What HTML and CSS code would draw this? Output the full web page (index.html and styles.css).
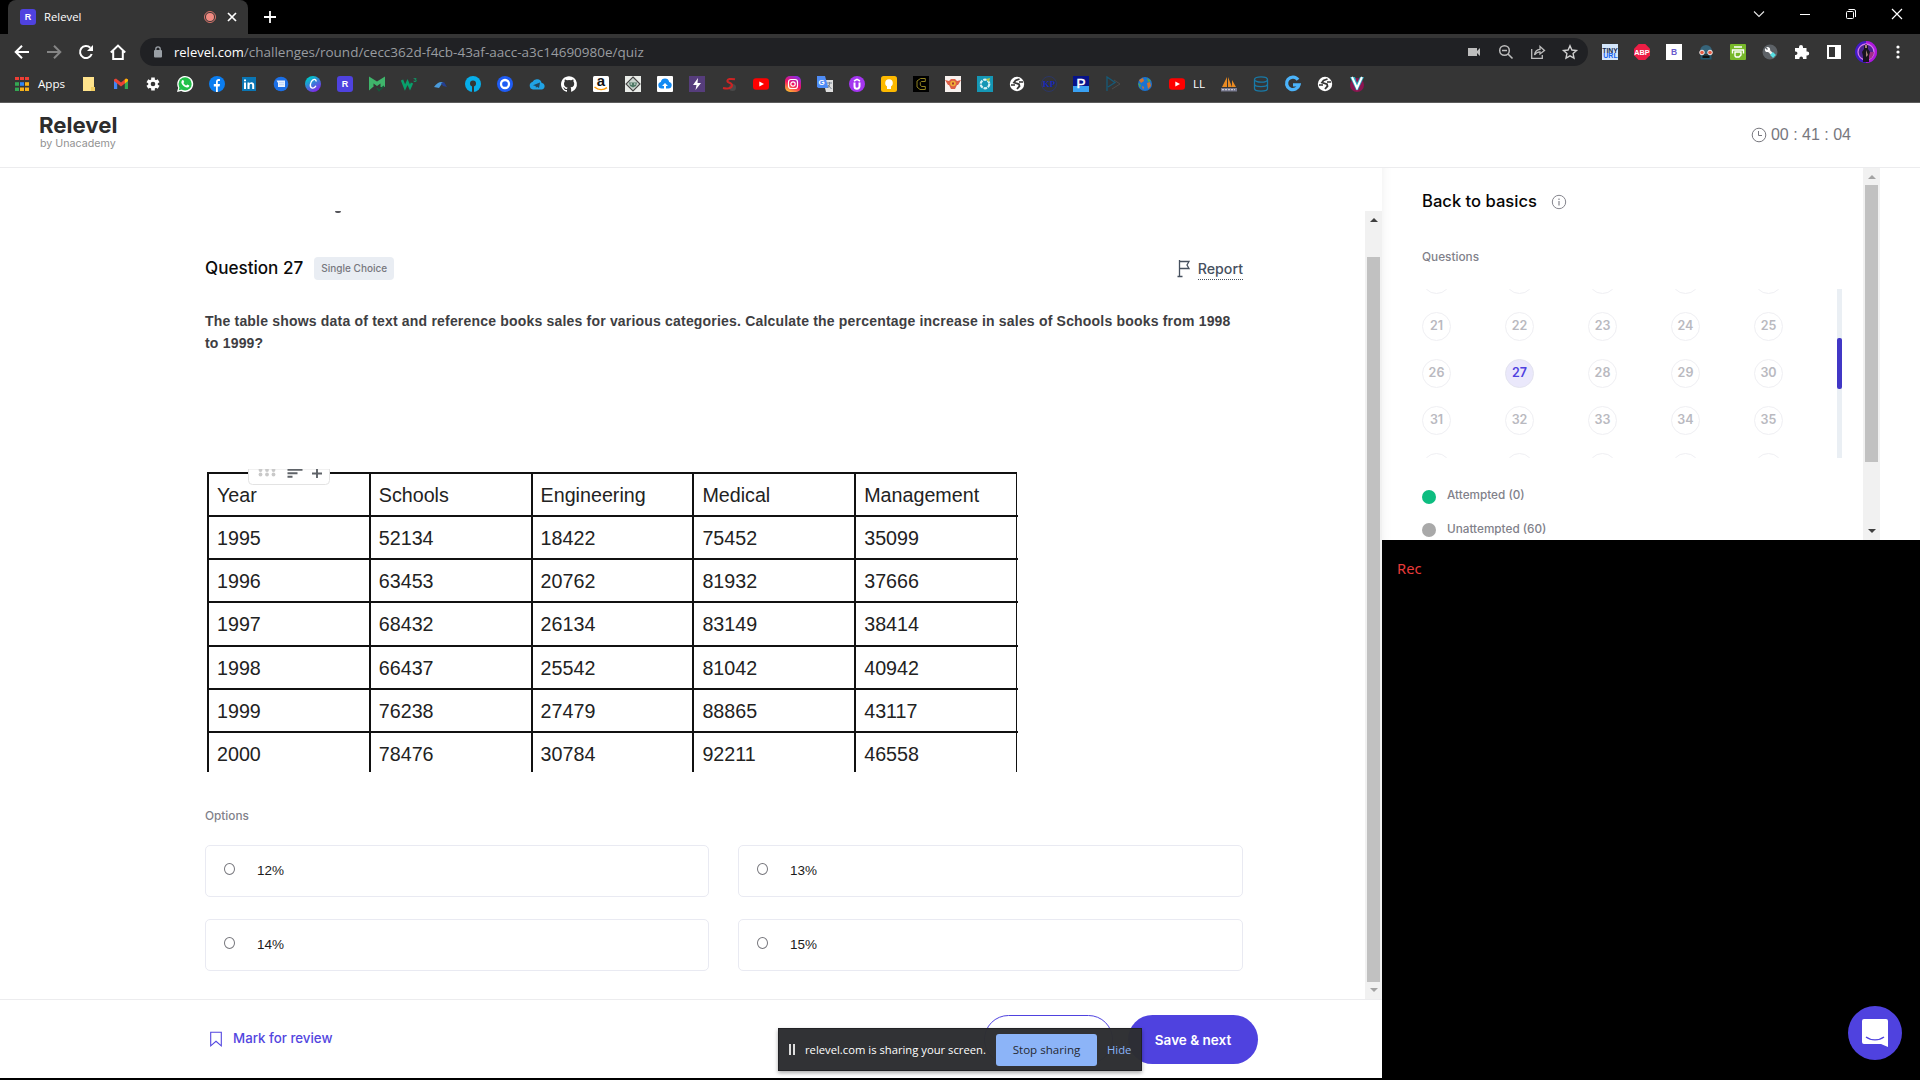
FILE: index.html
```html
<!DOCTYPE html>
<html lang="en">
<head>
<meta charset="utf-8">
<title>Relevel</title>
<link rel="stylesheet" href="styles.css">
</head>
<body>
<header class="browser">
  <div class="tabstrip">
    <div class="tab">
      <svg class="i16" viewBox="0 0 16 16"><rect width="16" height="16" rx="3" fill="#4f42df"/><text x="8" y="11.2" text-anchor="middle" class="glyph bold" font-size="9" fill="#fff">R</text></svg>
      <span class="tab-title">Relevel</span>
      <svg class="rec-dot" viewBox="0 0 12 12"><circle cx="6" cy="6" r="5.5" fill="none" stroke="#d9746b"/><circle cx="6" cy="6" r="4" fill="#f28b82"/></svg>
      <svg class="tab-close" viewBox="0 0 10 10"><path d="M1 1l8 8M9 1L1 9" stroke="#fff" stroke-width="1.7"/></svg>
    </div>
    <svg class="new-tab" viewBox="0 0 12 12"><path d="M6 0v12M0 6h12" stroke="#fff" stroke-width="1.8"/></svg>
    <div class="window-controls">
      <svg viewBox="0 0 12 12"><path d="M1 3.5l5 5 5-5" fill="none" stroke="#e6e6e6" stroke-width="1.1"/></svg>
      <svg viewBox="0 0 12 12"><path d="M1 6.5h10" stroke="#fff"/></svg>
      <svg viewBox="0 0 12 12"><rect x="1.5" y="3.5" width="7" height="7" rx="1" fill="none" stroke="#fff"/><path d="M3.5 1.5H9a1.5 1.5 0 0 1 1.5 1.5v6" fill="none" stroke="#fff"/></svg>
      <svg viewBox="0 0 12 12"><path d="M1 1l10 10M11 1L1 11" stroke="#fff" stroke-width="1.2"/></svg>
    </div>
  </div>
  <div class="toolbar">
    <div class="nav">
      <svg class="i16" viewBox="0 0 16 16"><path d="M15 8H2M8 1.7L1.7 8 8 14.3" fill="none" stroke="#fff" stroke-width="2"/></svg>
      <svg class="i16" viewBox="0 0 16 16"><path d="M1 8h13M8 1.7L14.3 8 8 14.3" fill="none" stroke="#858585" stroke-width="2"/></svg>
      <svg class="i16" viewBox="0 0 16 16"><path d="M13.7 10A6 6 0 1 1 12.3 3.8" fill="none" stroke="#fff" stroke-width="2"/><path d="M15 1v6H9z" fill="#fff"/></svg>
      <svg class="i16" viewBox="0 0 16 16"><path d="M.8 8.4L8 1.6l7.2 6.8M3.2 7v8h9.6V7" fill="none" stroke="#fff" stroke-width="2"/></svg>
    </div>
    <div class="omnibox">
      <svg class="lock" viewBox="0 0 10 12"><rect x="1" y="4" width="8" height="7.5" rx="1" fill="#9aa0a6"/><path d="M2.8 5V3a2.2 2.2 0 0 1 4.4 0v2" fill="none" stroke="#9aa0a6" stroke-width="1.3"/></svg>
      <span class="url"><b>relevel.com</b>/challenges/round/cecc362d-f4cb-43af-aacc-a3c14690980e/quiz</span>
      <div class="omni-actions">
        <svg class="i16" viewBox="0 0 16 16"><path d="M2 4h9v8H2zM11 7l3-3v8l-3-3z" fill="#bdbdbd"/></svg>
        <svg class="i16" viewBox="0 0 16 16"><circle cx="6.5" cy="6.5" r="4.8" fill="none" stroke="#bdbdbd" stroke-width="1.5"/><path d="M4 6.5h5M10 10l4.5 4.5" stroke="#bdbdbd" stroke-width="1.6"/></svg>
        <svg class="i16" viewBox="0 0 16 16"><path d="M1.7 5v9.3h10.6V11M4.5 11c.5-4 2.5-5.5 5.5-5.7V2.500L14.500 6.500 10 10V7.800C7.500 7.800 6 8.600 4.500 11z" fill="none" stroke="#bdbdbd" stroke-width="1.300"/></svg>
        <svg class="i16" viewBox="0 0 16 16"><path d="M8 1.800l1.900 4.200 4.600.5-3.400 3.100.9 4.600L8 11.900l-4 2.300.9-4.600L1.500 6.500 6.100 6z" fill="none" stroke="#d0d0d0" stroke-width="1.400"/></svg>
      </div>
    </div>
    <div class="extensions">
      <svg class="i16" viewBox="0 0 16 16"><rect width="16" height="16" fill="#d3e6fb"/><text x="8" y="8.500" text-anchor="middle" class="glyph bold" font-size="7.500" textLength="15.500" lengthAdjust="spacingAndGlyphs" fill="#14294f">TINY</text><text x="8.500" y="13.500" text-anchor="middle" class="glyph bold" font-size="7" fill="#1663ee">URL</text></svg>
      <svg class="i16" viewBox="0 0 16 16"><path d="M4.700 0h6.600L16 4.700v6.600L11.300 16H4.700L0 11.300V4.700z" fill="#ed1e45"/><text x="8" y="10.700" text-anchor="middle" class="glyph bold" font-size="7.300" fill="#fff">ABP</text></svg>
      <svg class="i16" viewBox="0 0 16 16"><rect width="16" height="16" fill="#fff"/><text x="8" y="11" text-anchor="middle" class="glyph bold" font-size="8.500" fill="#6a5acd">B</text></svg>
      <svg class="i16" viewBox="0 0 16 16"><path d="M2 7a6 6 0 0 1 12 0v3H2z" fill="#36647a"/><path d="M2.500 11h11v4.500h-11z" fill="#20566d"/><path d="M4.500 11.500h7v2.500h-7z" fill="#111"/><circle cx="4" cy="8.500" r="2.300" fill="#e85d45" stroke="#eee"/><circle cx="12" cy="8.500" r="2.300" fill="#e85d45" stroke="#eee"/></svg>
      <svg class="i16" viewBox="0 0 16 16"><rect width="16" height="16" rx="1" fill="#77b82a"/><path d="M4 3h8M2.500 9.500V6h11v3.500M5 8h6v3l-2 2H6l-1-1z" fill="none" stroke="#fff" stroke-width="1.400"/></svg>
      <svg class="i16" viewBox="0 0 16 16"><circle cx="8" cy="8" r="7.500" fill="#5d6267"/><path d="M5 5l5 5" stroke="#eee" stroke-width="2.500"/><circle cx="5.500" cy="5.500" r="2.600" fill="#fff"/><path d="M3 3l2.500 2.500" stroke="#5d6267" stroke-width="1.300"/><path d="M9.500 9.500l3 3" stroke="#56dfe3" stroke-width="4"/></svg>
      <svg class="i16" viewBox="0 0 16 16"><path d="M1 4h4V3a2 2 0 0 1 4 0v1h3.500v3.500h.7a2 2 0 0 1 0 4h-.7V15H9v-.8a1.800 1.800 0 0 0-3.600 0v.8H1v-4h.7a1.700 1.700 0 0 0 0-3.500H1z" fill="#fff"/></svg>
      <svg class="i16" viewBox="0 0 16 16"><path d="M1 1h14v14H1zM3 3v10h6V3z" fill="#fff" fill-rule="evenodd"/></svg>
    </div>
    <svg class="avatar" viewBox="0 0 22 22"><circle cx="11" cy="11" r="11" fill="#4219c8"/><path d="M11 0a11 11 0 0 1 0 22z" fill="#b018d9"/><circle cx="11" cy="11" r="8" fill="#4a2590" stroke="#d478ee" stroke-width="1.300"/><path d="M11 11h8a8 8 0 0 1-8 8z" fill="#a1308c"/><path d="M11 3l2 2v3l2 3-1 4v6H8v-6l-1-4 2-3V5z" fill="#17151c"/><path d="M10 4h2v3h-2zM11 9l2 5-2 2z" fill="#a78574"/></svg>
    <svg class="menu-dots" viewBox="0 0 4 16"><circle cx="2" cy="3" r="1.600" fill="#fff"/><circle cx="2" cy="8" r="1.600" fill="#fff"/><circle cx="2" cy="13" r="1.600" fill="#fff"/></svg>
  </div>
  <nav class="bookmarks">
    <span class="apps"><svg viewBox="0 0 14 14"><path d="M0 1.500h4M5 1.500h4M10 1.500h4" stroke="#ee3e35" stroke-width="3"/><path d="M0 7h4" stroke="#34a853" stroke-width="3.600"/><path d="M5 7h4" stroke="#2f86f6" stroke-width="3.600"/><path d="M10 7h4" stroke="#f6b21b" stroke-width="3.600"/><path d="M0 12.300h4" stroke="#34a853" stroke-width="3.400"/><path d="M5 12.300h9" stroke="#f6b21b" stroke-width="3.400" stroke-dasharray="4 1"/></svg>Apps</span>
    <svg class="i16" viewBox="0 0 16 16"><path d="M2 1h11v10h1v4H2z" fill="#ffe38c"/><path d="M10 11h4v4h-4z" fill="#f4cf60"/></svg>
    <svg class="i16" viewBox="0 0 16 16"><path d="M1 4.500V13h3.200V7z" fill="#4285f4"/><path d="M15 4.500V13h-3.200V7z" fill="#34a853"/><path d="M1 5V3.500l2-1 5 4 5-4 2 1V5l-7 5.500z" fill="#ea4335"/><path d="M11.800 3.700L13 2.500l2 1V5l-3.200 2.500z" fill="#fbbc04"/></svg>
    <svg class="i16" viewBox="0 0 16 16"><g stroke="#fff" stroke-width="3.600"><path d="M8 1.500v13M2.400 4.700l11.200 6.600M2.400 11.300l11.200-6.600"/></g><circle cx="8" cy="8" r="4.800" fill="#fff"/><circle cx="8" cy="8" r="2.300" fill="#353535"/></svg>
    <svg class="i16" viewBox="0 0 16 16"><path d="M0 16l1.200-4.200A8 8 0 1 1 4.200 14.900z" fill="#fff"/><circle cx="8.100" cy="7.900" r="6.600" fill="#23c04a"/><path d="M1.700 14.300l1-3.300 2.400 2.400z" fill="#23c04a"/><path d="M5 4.200l1.300-.2.900 2-.8 1c.8 1.400 1.500 2 2.900 2.600l1-1.100 2 1c0 1.500-1.300 2.100-2.300 1.900C7 11 4.600 8.500 4.300 6.200z" fill="#fff"/></svg>
    <svg class="i16" viewBox="0 0 16 16"><circle cx="8" cy="8" r="8" fill="#0b7df0"/><path d="M7 16v-5.500H4.800V8H7V6c0-2.300 1.400-3.400 3.900-3v2.100H9.600c-.6 0-.8.3-.8 1V8h2.200l-.4 2.500H8.800V16z" fill="#fff"/></svg>
    <svg class="i16" viewBox="0 0 16 16"><rect x="1" y="1" width="14" height="14" fill="#0a76b4"/><path d="M3 6.500h2V13H3zM3 3.400h2v1.900H3zM6.500 6.500h2v.9c1.200-1.700 4.700-1.500 4.700 1.700V13h-2V9.500c0-1.900-2.600-1.800-2.600 0V13H6.500z" fill="#fff"/></svg>
    <svg class="i16" viewBox="0 0 16 16"><circle cx="8" cy="8" r="7.300" fill="#1b6fe6"/><path d="M3.500 4.500H12V11H5V7z" fill="#e6f0ff"/><path d="M6 6.700h5M6 8.700h5" stroke="#b8d2f8"/></svg>
    <svg class="i16" viewBox="0 0 16 16"><defs><linearGradient id="canva" x2=".6" y2="1"><stop offset=".2" stop-color="#00c4cc"/><stop offset="1" stop-color="#7d2ae8"/></linearGradient></defs><circle cx="8" cy="8" r="8" fill="url(#canva)"/><path d="M11 5.500c.4-2-1.500-2.600-3-1.600-2.800 1.900-3.700 7-1.200 8 1.600.6 3.300-.6 4.100-2.200" fill="none" stroke="#fff" stroke-width="1.400"/></svg>
    <svg class="i16" viewBox="0 0 16 16"><rect width="16" height="16" rx="3" fill="#4f42df"/><text x="8" y="11.200" text-anchor="middle" class="glyph bold" font-size="9" fill="#fff">R</text></svg>
    <svg class="i16" viewBox="0 0 16 16"><path d="M0 .5l8 5 8-5V11H0zM0 11h4l-4 3.500z" fill="#3fb56b"/><path d="M4.500 7.500L8 10l3.500-2.500V11h-7z" fill="#353535"/><path d="M8 12l2 2.500L15 10" fill="none" stroke="#14593a" stroke-width="1.600"/></svg>
    <svg class="i16" viewBox="0 0 16 16"><path d="M1 4l3 7.500L6.500 6 9 11.500 11 7" fill="none" stroke="#08a06b" stroke-width="2.500"/><text x="12.500" y="5.500" class="glyph bold" font-size="6" fill="#08a06b">3</text></svg>
    <svg class="i16" viewBox="0 0 16 16"><path d="M1 11c3-4 5-5.500 9-5l-4 6z" fill="#4a9bdc"/><path d="M8 7l3-1 3 5-4-1z" fill="#243f92"/></svg>
    <svg class="i16" viewBox="0 0 16 16"><circle cx="8" cy="8" r="8" fill="#07aeea"/><circle cx="8" cy="7.500" r="3" fill="#353535"/><path d="M7 8h2v8H7z" fill="#353535"/></svg>
    <svg class="i16" viewBox="0 0 16 16"><circle cx="8" cy="8" r="8" fill="#1f5cf4"/><circle cx="8" cy="8" r="4" fill="none" stroke="#fff" stroke-width="2.300"/></svg>
    <svg class="i16" viewBox="0 0 16 16"><path d="M4 13.500a3.800 3.800 0 0 1-.6-7.400A5 5 0 0 1 12.700 7 3.300 3.300 0 0 1 13 13.500z" fill="#20a3e5"/><path d="M4 9.300L11 6.500 10 12l-2-1.300-1 1-.4-1.800z" fill="#23465e"/></svg>
    <svg class="i16" viewBox="0 0 16 16"><path d="M8 .2C3.600.2 0 3.800 0 8.200c0 3.500 2.300 6.500 5.500 7.600.4.100.5-.2.500-.4v-1.500c-2.200.5-2.700-1-2.700-1-.4-.9-.9-1.200-.9-1.200-.7-.5.100-.5.100-.5.800.1 1.200.8 1.200.8.700 1.300 1.900.9 2.400.7.100-.5.300-.9.500-1.100-1.800-.2-3.600-.9-3.600-4 0-.9.300-1.600.8-2.100-.1-.2-.4-1 .1-2.100 0 0 .7-.2 2.200.8a7.500 7.500 0 0 1 4 0c1.500-1 2.200-.8 2.200-.8.400 1.100.2 1.900.1 2.100.5.600.8 1.300.8 2.100 0 3.100-1.900 3.700-3.700 3.900.3.300.6.800.6 1.500v2.300c0 .2.100.5.600.4A8 8 0 0 0 8 .2z" fill="#fff"/></svg>
    <svg class="i16" viewBox="0 0 16 16"><rect width="16" height="16" rx="1.500" fill="#fff"/><text x="8" y="10" text-anchor="middle" class="glyph bold" font-size="15" fill="#111">a</text><path d="M1.500 11c4 3.300 9 3.300 12.500.7" fill="none" stroke="#f90" stroke-width="1.500"/></svg>
    <svg class="i16" viewBox="0 0 16 16"><rect width="16" height="16" fill="#e9ece8"/><path d="M8 1l7 7-7 7-7-7z" fill="#c8d2cc" stroke="#444" stroke-width="1.100"/><path d="M4 6.500h8l-1 3.500-3 1.500L5 10z" fill="#4e7865"/><path d="M5.500 8h1.500M9 8h1.500" stroke="#fff"/></svg>
    <svg class="i16" viewBox="0 0 16 16"><rect width="16" height="16" rx="1" fill="#fff"/><path d="M4.500 12.500a3.300 3.300 0 0 1-.7-6.500 4.300 4.300 0 0 1 8.400 0 3.300 3.300 0 0 1-.7 6.500z" fill="#128af3"/><path d="M8 7l3 3H9v4H7v-4H5z" fill="#fff"/></svg>
    <svg class="i16" viewBox="0 0 16 16"><rect width="16" height="16" fill="#563d7c"/><path d="M9 2L4 9h3.500L6.500 14l5.500-7H8.500z" fill="#fff"/></svg>
    <svg class="i16" viewBox="0 0 16 16"><circle cx="11.500" cy="11.500" r="3.500" fill="#494949"/><path d="M14 3.300C9 2.500 6.500 3 6.300 5s5.200 1.500 4.700 4.500c-.4 3-5 3.500-9 2.500" fill="none" stroke="#cc2424" stroke-width="2"/></svg>
    <svg class="i16" viewBox="0 0 16 16"><rect y="2.300" width="16" height="11.400" rx="3" fill="#f00"/><path d="M6.300 5.500L11 8l-4.700 2.500z" fill="#fff"/></svg>
    <svg class="i16" viewBox="0 0 16 16"><defs><linearGradient id="insta" x1=".7" y1="0" x2=".2" y2="1"><stop offset="0" stop-color="#8a2be2"/><stop offset=".5" stop-color="#f5125f"/><stop offset="1" stop-color="#fdc12f"/></linearGradient></defs><rect width="16" height="16" rx="5" fill="url(#insta)"/><rect x="3.500" y="3.500" width="9" height="9" rx="2.500" fill="none" stroke="#fff" stroke-width="1.200"/><circle cx="8" cy="8" r="2.200" fill="none" stroke="#fff" stroke-width="1.200"/></svg>
    <svg class="i16" viewBox="0 0 16 16"><path d="M6 4h10v12H9z" fill="#dedede"/><path d="M0 0h8l3.500 12H1.500L0 11z" fill="#4f8df6"/><text x="1.500" y="9" class="glyph bold" font-size="8" fill="#fff">G</text><path d="M10 7h5M12.500 6c0 3 0 4-2 6M11 9l3.500 4" fill="none" stroke="#76818f"/></svg>
    <svg class="i16" viewBox="0 0 16 16"><circle cx="8" cy="8" r="8" fill="#a435f0"/><path d="M5.500 6.500v3.800a2.500 2.500 0 0 0 5 0V6.500" fill="none" stroke="#fff" stroke-width="2"/><path d="M5 5l3-1.700L11 5" fill="none" stroke="#fff" stroke-width="1.500"/></svg>
    <svg class="i16" viewBox="0 0 16 16"><rect width="16" height="16" rx="2.500" fill="#fdb900"/><circle cx="8" cy="7" r="3.800" fill="#fff"/><path d="M6 10h4v3H6z" fill="#fff"/></svg>
    <svg class="i16" viewBox="0 0 16 16"><rect width="16" height="16" fill="#000"/><path d="M12.300 2.500H7.500L4 5v6l3 2.500h5.300v-3H8.500L7.300 9V6.500l1-1h4z" fill="none" stroke="#8f8120"/></svg>
    <svg class="i16" viewBox="0 0 16 16"><rect width="16" height="16" fill="#f8f1ee"/><path d="M0 4l4 1 2-2h4l2 2 4-1-3 5H3zM4 9h8l-2 4H6z" fill="#dd5f46"/><circle cx="8" cy="7.500" r="2.800" fill="#efaf36"/><path d="M7 6.500h2v2H7z" fill="#a8352f"/></svg>
    <svg class="i16" viewBox="0 0 16 16"><rect width="16" height="16" fill="#1597b5"/><circle cx="8" cy="8" r="4.300" fill="none" stroke="#d6f1f4" stroke-width="2.200" stroke-dasharray="3.500 1"/><path d="M9 3l4-1-1 4z" fill="#b8c943"/></svg>
    <svg class="i16" viewBox="0 0 16 16"><circle cx="8" cy="8" r="7.200" fill="#fff"/><path d="M10.500 3L6.500 4.500 5 6.500l5 1.700.5 2L8 13" fill="none" stroke="#353535" stroke-width="1.800"/><path d="M10 6h4M2 9h4" stroke="#353535" stroke-width="1.300"/></svg>
    <svg class="i16" viewBox="0 0 16 16"><circle cx="8" cy="8" r="7.500" fill="none" stroke="#27357c" stroke-width=".7"/><text x="8" y="10.800" text-anchor="middle" class="serif-glyph" font-size="9" fill="#1528bb">KP</text></svg>
    <svg class="i16" viewBox="0 0 16 16"><rect width="16" height="16" fill="#06128a"/><path d="M0 10h16v6H0z" fill="#39a1f4"/><text x="8" y="12" text-anchor="middle" class="glyph" font-size="13.500" stroke="#fff" stroke-width=".5" fill="#fff">P</text></svg>
    <svg class="i16" viewBox="0 0 16 16"><path d="M2 15V1l8 5.500-7 4.500" fill="none" stroke="#165a78" stroke-width="1.300"/><path d="M9 4l6 4-8 5" fill="none" stroke="#4b4b4b"/></svg>
    <svg class="i16" viewBox="0 0 16 16"><circle cx="8" cy="8" r="7" fill="#1a73d2"/><path d="M2 4l4-2 1 3-3 2zM10 7l3-1 1 4-3 3zM5 10l2 1-1 3z" fill="#d5732a"/><path d="M10 2l4 3-3 1zM1 7l3 2-1 3z" fill="#56a83d"/></svg>
    <span class="bookmark-folder"><svg class="i16" viewBox="0 0 16 16"><rect y="2.300" width="16" height="11.400" rx="3" fill="#f00"/><path d="M6.300 5.500L11 8l-4.700 2.500z" fill="#fff"/></svg>LL</span>
    <svg class="i16" viewBox="0 0 16 16"><path d="M1 11L6 1v10zM7 11V1l4 10zM11 11V4l4 7z" fill="#e98a22"/><path d="M0 12h16v3.500H0z" fill="#77788f"/><path d="M1 13.700h13" stroke="#ddd" stroke-dasharray="2 1"/></svg>
    <svg class="i16" viewBox="0 0 16 16"><ellipse cx="8" cy="3.500" rx="6.500" ry="2.700" fill="none" stroke="#1979a6" stroke-width="1.300"/><path d="M1.500 3.500v9c0 3.500 13 3.500 13 0v-9M1.500 8c0 3.500 13 3.500 13 0" fill="none" stroke="#1979a6" stroke-width="1.300"/></svg>
    <svg class="i16" viewBox="0 0 16 16"><path d="M13 3.700A6.300 6.300 0 1 0 14 8.800H8" fill="none" stroke="#4bb3fa" stroke-width="3.300"/></svg>
    <svg class="i16" viewBox="0 0 16 16"><circle cx="8" cy="8" r="7.200" fill="#fff"/><path d="M10.500 3L6.500 4.500 5 6.500l5 1.700.5 2L8 13" fill="none" stroke="#353535" stroke-width="1.800"/><path d="M10 6h4M2 9h4" stroke="#353535" stroke-width="1.300"/></svg>
    <svg class="i16" viewBox="0 0 16 16"><circle cx="8" cy="9" r="7" fill="#8b1551"/><path d="M1 1h5l2 6 3-6h4L9 14H7z" fill="#27a9c0"/><path d="M3 1l5 11 5-11" fill="none" stroke="#fff" stroke-width="2"/></svg>
  </nav>
</header>

<div class="app">
  <header class="app-header">
    <div class="brand"><span class="brand-name">Relevel</span><span class="brand-by">by Unacademy</span></div>
    <div class="timer"><svg viewBox="0 0 16 16"><circle cx="8" cy="8" r="6.800" fill="none" stroke="#77777e"/><path d="M7.500 4v4.500H11" fill="none" stroke="#77777e"/></svg>00 : 41 : 04</div>
  </header>
  <div class="columns">
    <div class="main-col">
      <main class="quiz">
        <div class="scroll-area">
          <div class="clipped-line"></div>
          <div class="question-head">
            <h1>Question 27</h1><span class="chip">Single Choice</span>
            <a class="report"><svg viewBox="0 0 14 18"><path d="M2.500 0v16.500M.5 16.500h5M2.500 1.500h9.500l-2 3.500 2 3.500H2.500" fill="none" stroke="#47515f" stroke-width="1.300"/></svg><span>Report</span></a>
          </div>
          <p class="prompt">The table shows data of text and reference books sales for various categories. Calculate the percentage increase in sales of Schools books from 1998 to 1999?</p>
          <div class="figure">
            <div class="data-table">
              <span>Year</span><span>Schools</span><span>Engineering</span><span>Medical</span><span>Management</span>
              <span>1995</span><span>52134</span><span>18422</span><span>75452</span><span>35099</span>
              <span>1996</span><span>63453</span><span>20762</span><span>81932</span><span>37666</span>
              <span>1997</span><span>68432</span><span>26134</span><span>83149</span><span>38414</span>
              <span>1998</span><span>66437</span><span>25542</span><span>81042</span><span>40942</span>
              <span>1999</span><span>76238</span><span>27479</span><span>88865</span><span>43117</span>
              <span>2000</span><span>78476</span><span>30784</span><span>92211</span><span>46558</span>
            </div>
            <svg class="table-tools" viewBox="0 0 82 17"><path d="M.5 0v11.500a4 4 0 0 0 4 4h73a4 4 0 0 0 4-4V0z" fill="#fff" stroke="#e3e3e3"/><g fill="#c9c9c9"><circle cx="12.500" cy="1" r="1.900"/><circle cx="19" cy="1" r="1.900"/><circle cx="25.500" cy="1" r="1.900"/><circle cx="12.500" cy="5.500" r="1.900"/><circle cx="19" cy="5.500" r="1.900"/><circle cx="25.500" cy="5.500" r="1.900"/></g><path d="M39.500 .7h15M39.500 4.200h10M39.500 7.700h5M64 4.500h10M69 0v9" stroke="#5f6368" stroke-width="1.900"/></svg>
          </div>
          <h2 class="label">Options</h2>
          <div class="options">
            <label class="option"><i class="radio"></i>12%</label>
            <label class="option"><i class="radio"></i>13%</label>
            <label class="option"><i class="radio"></i>14%</label>
            <label class="option"><i class="radio"></i>15%</label>
          </div>
        </div>
        <div class="scrollbar quiz-scroll"><i class="arrow up dark"></i><i class="thumb"></i><i class="arrow down"></i></div>
      </main>
      <footer class="actions">
        <a class="mark"><svg viewBox="0 0 12 16"><path d="M.7 1.200h10.600v13.600L6 10.300.7 14.800z" fill="none" stroke="#5346e0" stroke-width="1.100"/></svg>Mark for review</a>
        <button class="btn ghost">Previous</button>
        <button class="btn primary">Save &amp; next</button>
      </footer>
    </div>
    <div class="side-col">
      <aside class="panel">
        <div class="panel-body">
          <h2 class="section-title">Back to basics <svg viewBox="0 0 16 16"><circle cx="8" cy="8" r="6.700" fill="none" stroke="#85858d"/><path d="M8 7v4.500M8 4.500V6" stroke="#85858d" stroke-width="1.200"/></svg></h2>
          <h3 class="label">Questions</h3>
          <div class="palette">
            <div class="numbers">
              <span></span><span></span><span></span><span></span><span></span>
              <span>21</span><span>22</span><span>23</span><span>24</span><span>25</span>
              <span>26</span><span class="current">27</span><span>28</span><span>29</span><span>30</span>
              <span>31</span><span>32</span><span>33</span><span>34</span><span>35</span>
              <span></span><span></span><span></span><span></span><span></span>
            </div>
            <div class="mini-scroll"><i></i></div>
          </div>
          <ul class="legend">
            <li><i class="green"></i>Attempted (0)</li>
            <li><i class="grey"></i>Unattempted (60)</li>
          </ul>
        </div>
        <div class="scrollbar panel-scroll"><i class="arrow up"></i><i class="thumb"></i><i class="arrow down dark"></i></div>
      </aside>
      <div class="camera">
        <span class="rec">Rec</span>
        <svg class="chat" viewBox="0 0 54 54"><circle cx="27" cy="27" r="27" fill="#4f42df"/><path d="M16 13h22a2 2 0 0 1 2 2v26l-7-3H16a2 2 0 0 1-2-2V15a2 2 0 0 1 2-2z" fill="#fff"/><path d="M18 31c5 3.800 13 3.800 18 0" fill="none" stroke="#4f42df" stroke-width="1.400"/></svg>
      </div>
    </div>
  </div>
</div>

<div class="share-bar">
  <i class="pause"></i><span class="share-text">relevel.com is sharing your screen.</span>
  <button class="stop">Stop sharing</button><a class="hide">Hide</a>
</div>
</body>
</html>
```
FILE: styles.css
```css
* { box-sizing: border-box; margin: 0; padding: 0; }
body { width: 1920px; height: 1080px; overflow: hidden; background: #000; font-family: Inter, "Open Sans", sans-serif; position: relative; }
svg { display: block; flex: none; overflow: visible; }
i { display: block; font-style: normal; }
button { border: 0; font: inherit; }
.i16 { width: 16px; height: 16px; }
.glyph { font-family: "Liberation Sans", sans-serif; }
.serif-glyph { font-family: "Liberation Serif", serif; font-weight: bold; }
.bold { font-weight: bold; }

/* Browser chrome */
.browser { height: 103px; background: #353535; border-bottom: 1px solid #5c5c5c; font-family: "Open Sans", sans-serif; color: #fff; }
.tabstrip { height: 34px; background: #000; display: flex; align-items: center; padding-left: 8px; }
.tab { width: 240px; height: 34px; background: #353535; border-radius: 8px 8px 0 0; display: flex; align-items: center; padding: 0 11px 0 12px; }
.tab-title { flex: 1; margin: -2px 0 0 8px; font-size: 11.300px; }
.rec-dot { width: 12px; height: 12px; margin-right: 11px; }
.tab-close { width: 10px; height: 10px; }
.new-tab { width: 12px; height: 12px; margin-left: 16px; }
.window-controls { margin: -6px 17px 0 auto; display: flex; gap: 34px; }
.window-controls svg { width: 12px; height: 12px; }
.toolbar { height: 36px; display: flex; align-items: center; }
.nav { width: 140px; padding-left: 14px; display: flex; gap: 16px; }
.omnibox { width: 1448px; height: 28px; border-radius: 14px; background: #202124; display: flex; align-items: center; padding: 0 10px 0 13px; }
.lock { width: 10px; height: 12px; }
.url { flex: 1; margin-left: 11px; font-size: 13.500px; color: #999ca0; line-height: 20px; }
.url b { font-weight: 400; font-size: 13px; color: #fff; }
.omni-actions, .extensions { display: flex; gap: 16px; }
.extensions { margin-left: 14px; }
.avatar { width: 22px; height: 22px; margin-left: 13px; }
.menu-dots { width: 4px; height: 16px; margin-left: 19px; }
.bookmarks { height: 28px; display: flex; align-items: center; gap: 16px; padding-left: 15px; font-size: 11.600px; line-height: 14px; }
.apps { width: 50px; display: flex; align-items: center; gap: 9px; }
.apps svg { width: 14px; height: 14px; }
.bookmark-folder { width: 36px; display: flex; align-items: center; gap: 8px; }

/* Application */
.app { height: 977px; display: flex; flex-direction: column; }
.app-header { height: 65px; background: #fff; border-bottom: 1px solid #ececee; display: flex; justify-content: space-between; padding: 9px 69px 0 39px; }
.brand { display: flex; flex-direction: column; color: #2d2d2d; }
.brand-name { font-size: 22.200px; font-weight: 700; line-height: 26px; letter-spacing: 0; }
.brand-by { font-size: 10.700px; line-height: 11px; color: #929292; margin-left: 1px; }
.timer { display: flex; align-items: flex-start; gap: 4px; padding-top: 13px; font: 16px/20px "Liberation Sans", sans-serif; color: #77777e; }
.timer svg { width: 16px; height: 16px; margin-top: 2px; }
.columns { flex: 1; display: flex; }
.main-col { width: 1382px; height: 910px; background: #fff; display: flex; flex-direction: column; }
.quiz { height: 831px; padding-top: 43px; display: flex; }
.scroll-area { width: 1365px; padding: 0 122px 0 205px; }
.clipped-line { width: 6px; height: 2px; background: #55555b; border-radius: 0 0 3px 3px; margin-left: 130px; }
.question-head { margin-top: 43px; height: 26px; display: flex; align-items: center; }
.question-head h1 { font-size: 17.100px; font-weight: 500; line-height: 22px; margin-top: -2px; color: #0b0b0b; }
.chip { width: 80px; height: 23px; margin: 0 0 1px 11px; background: #e9edf3; border-radius: 4px; text-align: center; font-size: 10px; font-weight: 500; line-height: 23px; color: #77777e; }
.report { margin-left: auto; display: flex; gap: 7px; align-items: flex-start; font-size: 14.200px; font-weight: 500; color: #47515f; }
.report svg { width: 14px; height: 18px; margin-top: 2px; }
.report span { line-height: 20px; padding-top: 1px; border-bottom: 1px dotted #47515f; }
.prompt { margin-top: 28px; font: bold 14px/22px "Liberation Sans", sans-serif; letter-spacing: .190px; color: #3e3e42; }
.figure { margin: 115px 0 0 2px; width: 811px; height: 303px; overflow: hidden; position: relative; padding-top: 3px; }
.data-table { display: grid; grid-template-columns: repeat(5, 161.800px); grid-auto-rows: 43.150px; width: 810px; border: solid #111; border-width: 2px 1px 0 2px; font: 19.700px/42px "Liberation Sans", sans-serif; color: #222; }
.data-table span { padding-left: 8px; border-right: 2px solid #111; border-bottom: 2px solid #111; }
.data-table span:nth-child(5n) { border-right: 0; }
.table-tools { position: absolute; left: 41px; top: 0; width: 82px; height: 17px; }
.label { font-size: 11.800px; font-weight: 500; line-height: 16px; color: #81818a; }
.scroll-area > .label { margin-top: 36px; }
.options { margin-top: 21px; display: grid; grid-template-columns: 504px 505px; gap: 22px 29px; }
.option { height: 52px; border: 1px solid #e9eaf2; border-radius: 5px; display: flex; align-items: center; padding: 0 0 2px 18px; font: 13.500px "Liberation Sans", sans-serif; color: #1b1b1b; }
.radio { width: 11px; height: 12px; border: 1px solid #76767c; border-radius: 50%; margin: 0 22px 2px 0; }
.actions { height: 79px; border-top: 1px solid #ececee; display: flex; align-items: center; padding: 1px 124px 0 210px; }
.mark { display: flex; align-items: center; gap: 11px; font-size: 13.300px; font-weight: 500; color: #5346e0; margin: 0 auto 4px 0; }
.mark svg { width: 12px; height: 16px; margin-top: 2px; }
.btn { width: 129px; height: 49px; border-radius: 25px; font-size: 13.500px; font-weight: 600; }
.ghost { background: #fff; border: 1px solid #4f42df; color: #4f42df; margin-right: 15px; }
.primary { background: #4f42df; color: #fff; width: 130px; }

/* Scrollbars */
.scrollbar { width: 17px; background: #f1f1f1; display: flex; flex-direction: column; align-items: center; }
.arrow { border: solid transparent; border-width: 0 4px; }
.up { border-bottom: 4px solid #a3a3a3; }
.down { border-top: 4px solid #a3a3a3; margin-top: auto; }
.up.dark { border-bottom-color: #404040; }
.down.dark { border-top-color: #404040; }
.thumb { width: 13px; background: #c1c1c1; }
.quiz-scroll { padding: 7px 0; }
.quiz-scroll .thumb { margin-top: 35px; height: 725px; }
.panel-scroll { padding: 7px 0; }
.panel-scroll .thumb { margin-top: 6px; height: 277px; }

/* Side panel */
.side-col { width: 538px; display: flex; flex-direction: column; }
.panel { height: 372px; background: #fff; display: flex; box-shadow: inset 12px 0 10px -10px #0000000d; overflow: hidden; }
.panel-body { width: 481px; padding: 21px 0 0 40px; }
.section-title { display: flex; align-items: center; gap: 14px; font-size: 16.600px; font-weight: 500; line-height: 24px; color: #050505; }
.section-title svg { width: 16px; height: 16px; margin-top: 2px; }
.panel-body > .label { margin-top: 36px; }
.palette { margin-top: 24px; height: 169px; display: flex; overflow: hidden; }
.numbers { width: 415px; margin-top: -24px; display: grid; grid-template-columns: repeat(5, 83px); grid-auto-rows: 47px; align-content: start; }
.numbers span { width: 29px; height: 29px; border: 1px solid #efeff3; border-radius: 50%; text-align: center; font-size: 12.500px; font-weight: 600; line-height: 25px; color: #b9b9c0; }
.numbers .current { background: #eae8fb; border-color: #e4e4ef; color: #4f42df; }
.mini-scroll { width: 5px; height: 169px; background: #eaeff4; padding-top: 49px; }
.mini-scroll i { height: 51px; background: #4137c5; border-radius: 2px; }
.legend { list-style: none; margin-top: 28px; font-size: 11.750px; font-weight: 500; color: #81818a; }
.legend li { height: 33px; display: flex; align-items: flex-start; gap: 11px; line-height: 18px; }
.legend li + li { line-height: 20px; }
.legend i { width: 14px; height: 14px; border-radius: 50%; margin-top: 4px; }
.green { background: #0dbd80; }
.grey { background: #a9a9a9; }

/* Camera preview */
.camera { flex: 1; background: #000; position: relative; padding: 16px 0 0 15px; }
.rec { font: 14.700px/24px "Noto Sans", sans-serif; color: #e93b3b; }
.chat { position: absolute; right: 18px; bottom: 20px; width: 54px; height: 54px; }

/* Screen sharing notice */
.share-bar { position: absolute; left: 778px; top: 1028px; width: 364px; height: 43px; background: #2d2e31fa; border: 1px solid #0000004d; box-shadow: 0 2px 4px #0005; display: flex; align-items: center; padding-left: 10px; font: 11.250px "Open Sans", sans-serif; color: #fff; }
.pause { width: 6px; height: 11px; border: solid #ddd; border-width: 0 2px; }
.share-text { margin-left: 10px; width: 191px; white-space: nowrap; }
.stop { width: 101px; height: 32px; border-radius: 3px; background: #8cb4f8; color: #262a33; font-size: 11.600px; }
.hide { margin-left: 10px; color: #8ab4f8; }
```
